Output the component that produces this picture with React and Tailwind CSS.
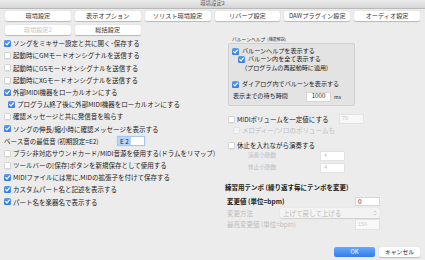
import React from "react";

function Check({ checked, disabled }) {
  if (checked) {
    return (
      <span className="w-[7px] h-[7px] shrink-0 rounded-[1.5px] bg-gradient-to-b from-[#5b9cf4] to-[#2f7be8] flex items-center justify-center">
        <svg viewBox="0 0 10 10" className="w-[7px] h-[7px]">
          <path d="M2.4 5.2 L4.3 7.1 L7.7 2.9" fill="none" stroke="#fff" strokeWidth="1.7" strokeLinecap="round" strokeLinejoin="round" />
        </svg>
      </span>
    );
  }
  return (
    <span
      className={
        "w-[7px] h-[7px] shrink-0 rounded-[1.5px] border-[0.5px] " +
        (disabled ? "bg-[#f4f4f4] border-[#e0e0e0]" : "bg-white border-[#d2d2d2] shadow-[0_0.5px_0.5px_rgba(0,0,0,0.1)]")
      }
    />
  );
}

function LRow({ checked, indent, children }) {
  return (
    <div className={"h-[12.2px] flex items-center whitespace-nowrap " + (indent ? "pl-[8px]" : "pl-[4px]")}>
      <Check checked={checked} />
      <span className="ml-[2px]">{children}</span>
    </div>
  );
}

function Tab({ children, disabled }) {
  return (
    <div
      className={
        "h-[10px] bg-white rounded-[2px] shadow-[0_0.5px_1px_rgba(0,0,0,0.22)] flex items-center justify-center text-[6.2px] leading-none whitespace-nowrap " +
        (disabled ? "text-[#c4c4c4]" : "text-[#333]")
      }
    >
      {children}
    </div>
  );
}

export default function App() {
  return (
    <div className="w-[425px] h-[260px] overflow-hidden bg-[#ececec] text-[#222] font-['Noto_Sans_CJK_JP',sans-serif] text-[6.5px] leading-none relative">
      {/* title bar */}
      <div className="h-[9px] bg-gradient-to-b from-[#ececec] to-[#d6d6d6] border-b-[0.5px] border-[#b9b9b9] flex items-center justify-center text-[5.4px] text-[#555]">
        環境設定2
      </div>
      {/* tabs */}
      <div className="grid grid-cols-6 gap-x-[4px] gap-y-[4px] px-[5px] pt-[2px]">
        <Tab>環境設定</Tab>
        <Tab>表示オプション</Tab>
        <Tab>ソリスト環境設定</Tab>
        <Tab>リバーブ設定</Tab>
        <Tab>DAWプラグイン設定</Tab>
        <Tab>オーディオ設定</Tab>
        <Tab disabled>環境設定2</Tab>
        <Tab>総括設定</Tab>
      </div>
      {/* body */}
      <div className="flex mt-[1px]">
        {/* left */}
        <div className="w-[212px] shrink-0 pt-[1.4px]">
          <LRow checked>ソングをミキサー設定と共に開く･保存する</LRow>
          <LRow>起動時にGMモードオンシグナルを送信する</LRow>
          <LRow>起動時にGSモードオンシグナルを送信する</LRow>
          <LRow>起動時にXGモードオンシグナルを送信する</LRow>
          <LRow checked>外部MIDI機器をローカルオンにする</LRow>
          <LRow checked indent>プログラム終了後に外部MIDI機器をローカルオンにする</LRow>
          <LRow>確認メッセージと共に発信音を鳴らす</LRow>
          <LRow checked>ソングの伸長/縮小時に確認メッセージを表示する</LRow>
          <div className="h-[12.2px] flex items-center whitespace-nowrap pl-[4px]">
            <span className="w-[113px]">ベース音の最低音 (初期設定=E2)</span>
            <span className="w-[28px] h-[10px] bg-white border-[0.5px] border-[#a9c6ee] shadow-[0_0_0_0.5px_#cfe0f8] flex items-center">
              <span className="bg-[#b5d3fb] h-full flex items-center px-[2px] text-[#222]">E 2</span>
            </span>
          </div>
          <LRow>ブラシ非対応サウンドカード/MIDI音源を使用する(ドラムをリマップ)</LRow>
          <LRow>ツールバーの[保存]ボタンを新規保存として使用する</LRow>
          <LRow checked>MIDIファイルには常に.MIDの拡張子を付けて保存する</LRow>
          <LRow checked>カスタムパート名と記述を表示する</LRow>
          <LRow checked>パート名を楽器名で表示する</LRow>
        </div>
        {/* right */}
        <div className="flex-1 relative">
          <div className="h-[6px] pl-[20px] flex items-center text-[4.8px] text-[#333] whitespace-nowrap">
            バルーンヘルプ<span className="ml-[2px] text-[4px]">(機能解説)</span>
          </div>
          <div className="ml-[16px] mt-[1px] w-[127px] h-[63px] bg-[#e3e3e3] border-[0.5px] border-[#d0d0d0] rounded-[2px] pt-[3px] pl-[3px] text-[6.1px]">
            <div className="h-[8px] flex items-center whitespace-nowrap">
              <Check checked />
              <span className="ml-[3px]">バルーンヘルプを表示する</span>
            </div>
            <div className="h-[18px] flex items-start pl-[6px] pt-[1.3px] whitespace-nowrap">
              <Check checked />
              <div className="ml-[3px] flex flex-col gap-[3px]">
                <span>バルーン内を全て表示する</span>
                <span className="-ml-[3px]">(プログラムの再起動時に適用)</span>
              </div>
            </div>
            <div className="mt-[7px] h-[8px] flex items-center whitespace-nowrap">
              <Check checked />
              <span className="ml-[3px]">ダイアログ内でバルーンを表示する</span>
            </div>
            <div className="mt-[3px] h-[11px] flex items-center pl-[1px] whitespace-nowrap">
              <span className="w-[73px]">表示までの待ち時間</span>
              <span className="w-[25px] h-[10px] bg-white border-[0.5px] border-[#d6d6d6] flex items-center justify-center">1000</span>
              <span className="ml-[3px] text-[5px]">ms</span>
            </div>
          </div>
          <div className="mt-[8px] h-[10px] pl-[16px] flex items-center whitespace-nowrap">
            <Check />
            <span className="ml-[2px] w-[102px]">MIDIボリュームを一定値にする</span>
            <span className="w-[25px] h-[10px] bg-[#f7f7f7] border-[0.5px] border-[#e2e2e2] flex items-center pl-[2px] text-[#c4c4c4] text-[5.5px]">70</span>
          </div>
          <div className="h-[13px] pl-[21px] flex items-center whitespace-nowrap text-[#bdbdbd]">
            <Check disabled />
            <span className="ml-[2px]">メロディー/ソロのボリュームも</span>
          </div>
          <div className="mt-[3px] h-[10px] pl-[16px] flex items-center whitespace-nowrap">
            <Check />
            <span className="ml-[2px]">休止を入れながら演奏する</span>
          </div>
          <div className="mt-[1px] h-[10px] pl-[36px] flex items-center whitespace-nowrap text-[#bdbdbd]">
            <span className="w-[72px] text-[5.6px]">演奏小節数</span>
            <span className="w-[25px] h-[10px] bg-white border-[0.5px] border-[#e2e2e2] flex items-center pl-[3px] text-[#c4c4c4] text-[5.5px]">4</span>
          </div>
          <div className="mt-[2px] h-[10px] pl-[36px] flex items-center whitespace-nowrap text-[#bdbdbd]">
            <span className="w-[72px] text-[5.6px]">休止小節数</span>
            <span className="w-[25px] h-[10px] bg-white border-[0.5px] border-[#e2e2e2] flex items-center pl-[3px] text-[#c4c4c4] text-[5.5px]">4</span>
          </div>
          <div className="mt-[9px] h-[10px] pl-[13px] flex items-center whitespace-nowrap font-semibold text-[#222]">
            練習用テンポ (繰り返す毎にテンポを変更)
          </div>
          <div className="mt-[5px] h-[9px] pl-[15px] flex items-center whitespace-nowrap">
            <span className="w-[128px] font-semibold text-[#222]">変更値 (単位=bpm)</span>
            <span className="w-[25px] h-[9px] bg-white border-[0.5px] border-[#d6d6d6] flex items-center pl-[2px]">0</span>
          </div>
          <div className="mt-[2px] h-[10px] pl-[15px] flex items-center whitespace-nowrap text-[#bdbdbd]">
            <span className="w-[53px]">変更方法</span>
            <span className="w-[100px] h-[10px] bg-[#f3f3f3] rounded-[2px] shadow-[0_0.5px_1px_rgba(0,0,0,0.12)] flex items-center pl-[3px] text-[#b8b8b8]">
              <span className="flex-1">上げて戻して上げる</span>
              <svg viewBox="0 0 6 10" className="w-[4px] h-[6px] mr-[3px]">
                <path d="M1 3.6 L3 1.6 L5 3.6 M1 6.4 L3 8.4 L5 6.4" fill="none" stroke="#b5b5b5" strokeWidth="1" />
              </svg>
            </span>
          </div>
          <div className="mt-[1px] h-[11px] pl-[15px] flex items-center whitespace-nowrap text-[#bdbdbd]">
            <span className="w-[128px]">最高変更値 (単位=bpm)</span>
            <span className="w-[25px] h-[11px] bg-[#f9f9f9] border-[0.5px] border-[#e2e2e2] flex items-center pl-[2px] text-[#c8c8c8] text-[5.5px]">150</span>
          </div>
          <div className="mt-[17px] h-[10px] pl-[122px] flex items-center gap-[4px]">
            <span className="w-[41px] h-[10px] rounded-[2px] bg-gradient-to-b from-[#6aa9f7] to-[#2f7cec] text-white flex items-center justify-center text-[5.8px]">OK</span>
            <span className="w-[41px] h-[10px] rounded-[2px] bg-white shadow-[0_0.5px_1px_rgba(0,0,0,0.22)] flex items-center justify-center text-[5.8px] text-[#222]">キャンセル</span>
          </div>
        </div>
      </div>
    </div>
  );
}
